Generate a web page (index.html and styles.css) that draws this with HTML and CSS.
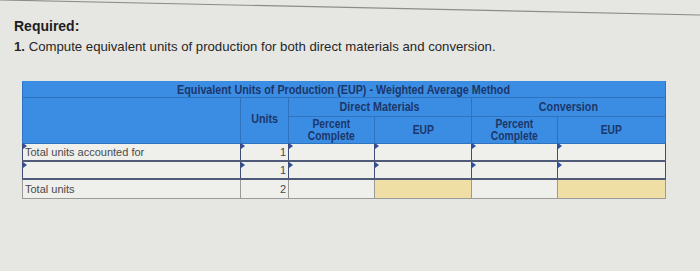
FILE: index.html
```html
<!DOCTYPE html>
<html>
<head>
<meta charset="utf-8">
<link rel="stylesheet" href="styles.css">
</head>
<body>
<svg class="edge" width="700" height="20" viewBox="0 0 700 20"><line x1="0" y1="0" x2="700" y2="15" stroke="#8c8c8c" stroke-width="1.2"/></svg>
<div class="page">
  <div class="req">Required:</div>
  <div class="task"><b>1.</b> Compute equivalent units of production for both direct materials and conversion.</div>
  <table class="eup">
    <colgroup>
      <col class="c-label"><col class="c-units"><col class="c-pc"><col class="c-eup"><col class="c-pc2"><col class="c-eup2">
    </colgroup>
    <tr class="h-title"><th colspan="6"><span class="sq">Equivalent Units of Production (EUP) - Weighted Average Method</span></th></tr>
    <tr class="h-grp">
      <th rowspan="2" class="blank"></th>
      <th rowspan="2" class="units-h"><span class="sq">Units</span></th>
      <th colspan="2"><span class="sq">Direct Materials</span></th>
      <th colspan="2"><span class="sq">Conversion</span></th>
    </tr>
    <tr class="h-sub">
      <th><span class="sq">Percent<br>Complete</span></th>
      <th><span class="sq">EUP</span></th>
      <th><span class="sq">Percent<br>Complete</span></th>
      <th><span class="sq">EUP</span></th>
    </tr>
    <tr class="r1">
      <td class="lab in">Total units accounted for</td>
      <td class="num in">1</td>
      <td class="in"></td>
      <td class="in"></td>
      <td class="in"></td>
      <td class="in"></td>
    </tr>
    <tr class="r2">
      <td class="lab in"></td>
      <td class="num in">1</td>
      <td class="in"></td>
      <td class="in"></td>
      <td class="in"></td>
      <td class="in"></td>
    </tr>
    <tr class="r3">
      <td class="lab">Total units</td>
      <td class="num">2</td>
      <td></td>
      <td class="yel"></td>
      <td></td>
      <td class="yel"></td>
    </tr>
  </table>
</div>
</body>
</html>
```
FILE: styles.css
```css
html, body {
  margin: 0;
  padding: 0;
}
body {
  width: 700px;
  height: 271px;
  background: #e6e6e3;
  font-family: "Liberation Sans", Arial, sans-serif;
  position: relative;
  overflow: hidden;
}
.edge {
  position: absolute;
  left: 0;
  top: 0;
}
.page {
  padding: 18px 0 0 14px;
}
.req {
  font-size: 14px;
  font-weight: bold;
  color: #1e1e1e;
  line-height: 16px;
}
.task {
  font-size: 13.2px;
  color: #262626;
  line-height: 18px;
  margin-top: 4px;
}
.task b {
  font-weight: bold;
}
.eup {
  border-collapse: collapse;
  margin: 25px 0 0 8px;
  table-layout: fixed;
  width: 643px;
}
.c-label { width: 218px; }
.c-units { width: 48px; }
.c-pc { width: 86px; }
.c-eup { width: 97px; }
.c-pc2 { width: 86px; }
.c-eup2 { width: 108px; }
.eup th {
  background: #3b8de4;
  color: #1b376a;
  font-family: "Liberation Sans", Arial, sans-serif;
  font-weight: bold;
  font-size: 12.5px;
  line-height: 12px;
  padding: 0;
  border: 1px solid #2f72be;
  text-align: center;
  white-space: nowrap;
}
.sq {
  display: inline-block;
  transform: scaleX(0.86);
}
.h-title th {
  height: 15px;
  border-top-color: #3b8de4;
}
.h-grp th {
  height: 18px;
}
.h-sub th {
  height: 26px;
  line-height: 12.5px;
  font-size: 12px;
}
.eup th.units-h {
  vertical-align: middle;
  padding-bottom: 4px;
}
.eup td {
  background: #efefec;
  border: 1px solid #9a9a98;
  padding: 0 3px;
  font-size: 11px;
  color: #4a4a4a;
  position: relative;
  height: 16px;
}
.eup tr.r3 td {
  height: 18px;
}
.eup td.in {
  border-bottom: 2px solid #4e5a78;
}
.eup tr.r1 td.in, .eup tr.r2 td.in {
  border-left: 1px solid #3f4c7a;
  border-right: 1px solid #3f4c7a;
}
.eup td.lab {
  text-align: left;
  padding-left: 2px;
}
.eup td.num {
  text-align: right;
  padding-right: 2px;
}
.eup td.yel {
  background: #f0dfa4;
}
.eup tr.r1 td.in::before, .eup tr.r2 td.in::before {
  content: "";
  position: absolute;
  left: 0;
  top: 0;
  border-top: 3px solid transparent;
  border-bottom: 3px solid transparent;
  border-left: 4px solid #2c4fa0;
}
.eup tr.r1 td.in::before {
  top: -1px;
}
```
